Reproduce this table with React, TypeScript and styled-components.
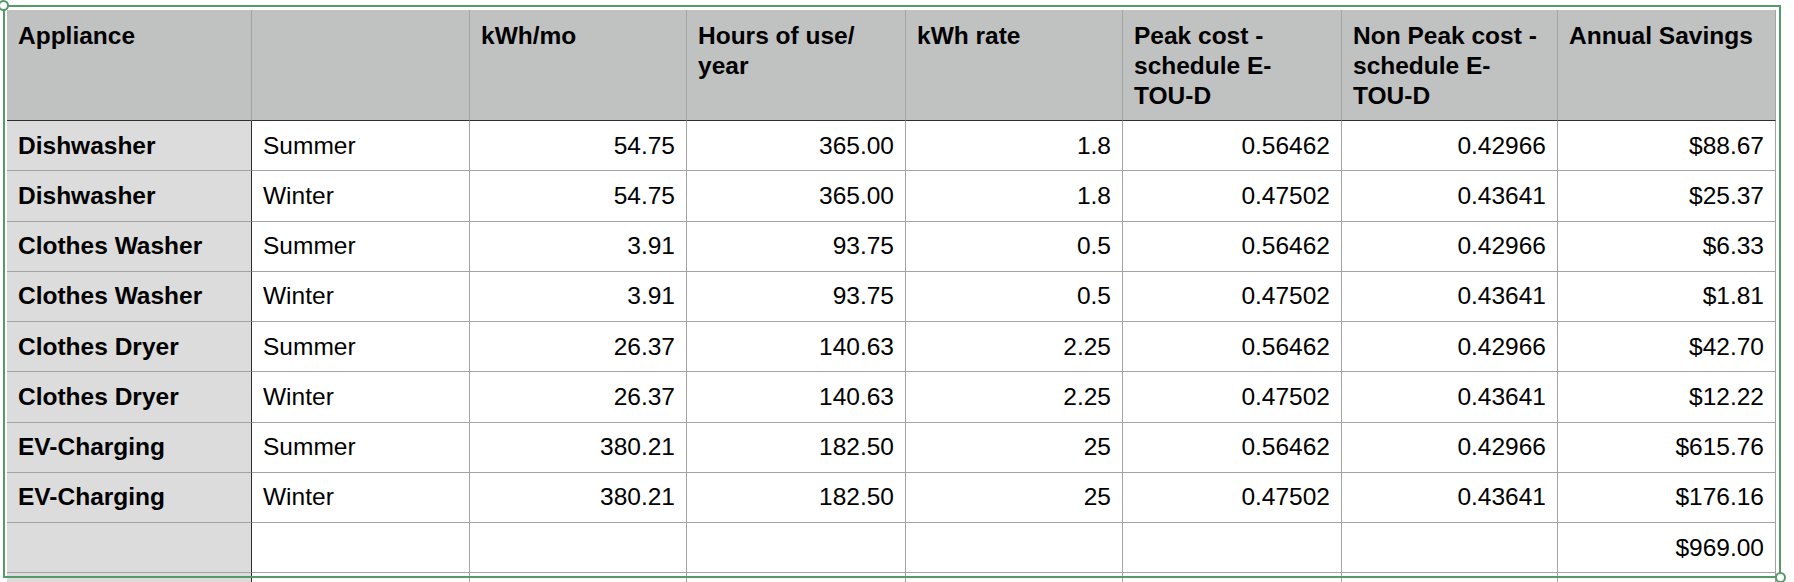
import React from "react";
import styled, { createGlobalStyle } from "styled-components";

const Global = createGlobalStyle`
  html, body {
    margin: 0;
    padding: 0;
    background: #ffffff;
    overflow: hidden;
  }
  body {
    font-family: "Liberation Sans", Arial, Helvetica, sans-serif;
    color: #000;
  }
`;

const Page = styled.div`
  position: relative;
  width: 1794px;
  height: 582px;
  padding: 10px 0 0 7px;
  box-sizing: border-box;
  overflow: hidden;
`;

const Sheet = styled.div`
  display: grid;
  grid-template-columns: 245px 218px 217px 219px 217px 219px 216px 218px;
  grid-template-rows: 111px repeat(10, 50.25px);
  font-size: 24.5px;
`;

const HeadCell = styled.div`
  background: #c0c2c1;
  border-right: 1px solid #a3a5a4;
  border-bottom: 1px solid #2e2e2e;
  padding: 11px 11px 0 11px;
  font-weight: 700;
  line-height: 30px;
  box-sizing: border-box;
  overflow: hidden;
`;

const Cell = styled.div<{ $label?: boolean; $num?: boolean }>`
  display: flex;
  align-items: center;
  justify-content: ${(p) => (p.$num ? "flex-end" : "flex-start")};
  padding: 0 11px;
  box-sizing: border-box;
  background: ${(p) => (p.$label ? "#dcdcdc" : "#ffffff")};
  border-right: 1px solid ${(p) => (p.$label ? "#2e2e2e" : "#a3a3a3")};
  border-bottom: 1px solid #a3a3a3;
  font-weight: ${(p) => (p.$label ? 700 : 400)};
  white-space: nowrap;
  overflow: hidden;
`;

const Selection = styled.div`
  position: absolute;
  left: 3px;
  top: 5px;
  width: 1778px;
  height: 573px;
  border: 2px solid #559a68;
  box-sizing: border-box;
  pointer-events: none;
`;

const Handle = styled.div<{ $end?: boolean }>`
  position: absolute;
  width: 11px;
  height: 11px;
  border-radius: 50%;
  border: 2px solid #559a68;
  background: #ffffff;
  box-sizing: border-box;
  ${(p) => (p.$end ? "right: -7px; bottom: -7px;" : "left: -7px; top: -7px;")}
`;

type Row = [string, string, string, string, string, string, string, string];

const rows: Row[] = [
  ["Dishwasher", "Summer", "54.75", "365.00", "1.8", "0.56462", "0.42966", "$88.67"],
  ["Dishwasher", "Winter", "54.75", "365.00", "1.8", "0.47502", "0.43641", "$25.37"],
  ["Clothes Washer", "Summer", "3.91", "93.75", "0.5", "0.56462", "0.42966", "$6.33"],
  ["Clothes Washer", "Winter", "3.91", "93.75", "0.5", "0.47502", "0.43641", "$1.81"],
  ["Clothes Dryer", "Summer", "26.37", "140.63", "2.25", "0.56462", "0.42966", "$42.70"],
  ["Clothes Dryer", "Winter", "26.37", "140.63", "2.25", "0.47502", "0.43641", "$12.22"],
  ["EV-Charging", "Summer", "380.21", "182.50", "25", "0.56462", "0.42966", "$615.76"],
  ["EV-Charging", "Winter", "380.21", "182.50", "25", "0.47502", "0.43641", "$176.16"],
  ["", "", "", "", "", "", "", "$969.00"],
  ["", "", "", "", "", "", "", ""],
];

export default function App() {
  return (
    <>
      <Global />
      <Page>
        <Sheet>
          <HeadCell>Appliance</HeadCell>
          <HeadCell></HeadCell>
          <HeadCell>kWh/mo</HeadCell>
          <HeadCell>
            Hours of use/<wbr />year
          </HeadCell>
          <HeadCell>kWh rate</HeadCell>
          <HeadCell>
            Peak cost - schedule E-<wbr />TOU-D
          </HeadCell>
          <HeadCell>
            Non Peak cost - schedule E-<wbr />TOU-D
          </HeadCell>
          <HeadCell>Annual Savings</HeadCell>
          {rows.map((r, i) =>
            r.map((v, j) => (
              <Cell key={`${i}-${j}`} $label={j === 0} $num={j >= 2}>
                {v}
              </Cell>
            ))
          )}
        </Sheet>
        <Selection>
          <Handle />
          <Handle $end />
        </Selection>
      </Page>
    </>
  );
}
